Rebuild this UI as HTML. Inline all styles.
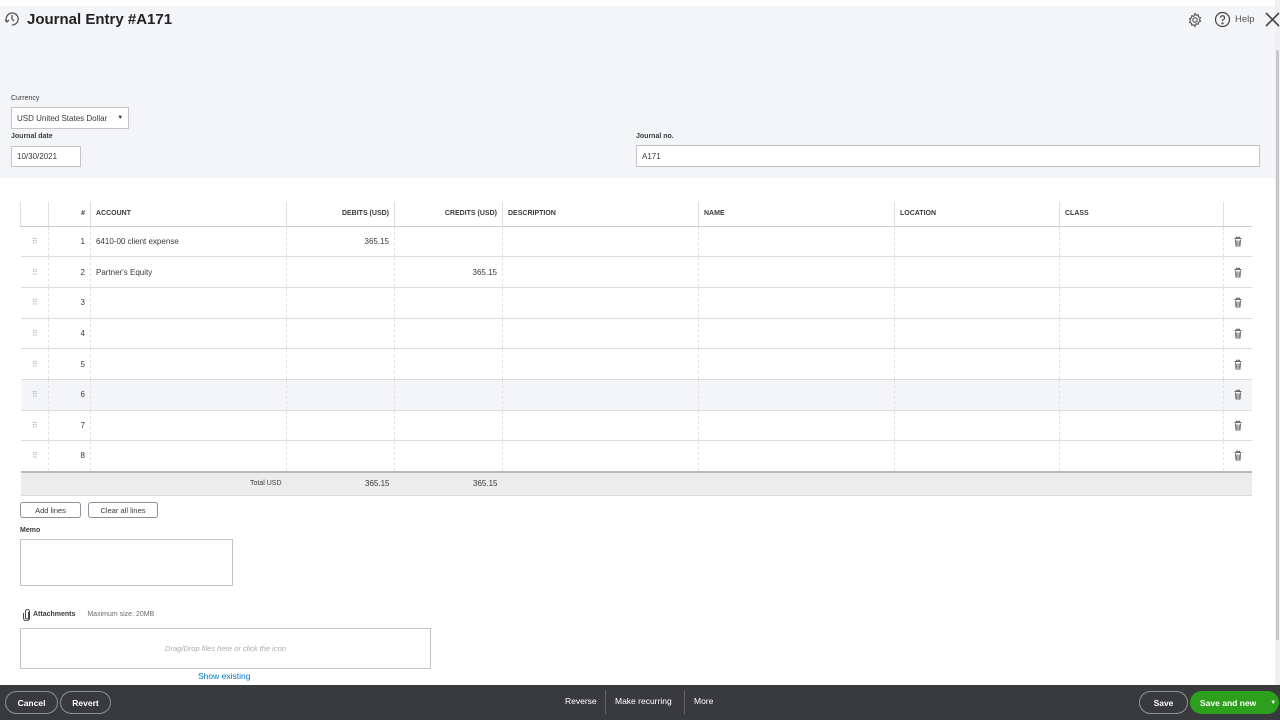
<!DOCTYPE html>
<html><head><meta charset="utf-8"><style>
*{box-sizing:border-box;margin:0;padding:0}
body{width:1280px;height:720px;overflow:hidden;background:#fff;font-family:"Liberation Sans",Arial,sans-serif;color:#393a3d;position:relative}
.a{position:absolute}
.hdr{left:0;top:6px;width:1275px;height:172px;background:#f4f5f8}
.sb{left:1275px;top:0;width:5px;height:686px;background:#f0f0f0}
.sb i{position:absolute;left:1px;top:50px;width:3px;height:590px;background:#c8c8c8}
.lbl{font-size:7px;font-weight:bold;color:#393a3d}
.inp{background:#fff;border:1px solid #c4c4c4;font-size:8px;padding-left:5px;display:flex;align-items:center;color:#393a3d}
table{position:absolute;left:20px;top:202px;border-collapse:collapse;font-size:8px;table-layout:fixed}
td{height:30.7px;border-bottom:1px solid #dcdcdc;border-left:1px dashed #e2e2e2;padding:0 5px;white-space:nowrap}
td:first-child{border-left:none}
tr.h td{height:24px;font-size:7px;font-weight:bold;border-bottom:1px solid #ccc;border-left:1px solid #e0e0e0;border-top:none}
tr.hl td{background:#f4f5f8}
tr.t td{height:24px;background:#ececec;border-top:2px solid #bbb;border-left:none}
.r{text-align:right}
.dr{color:#aaa;font-size:8px;text-align:center;letter-spacing:-1px}
.tr svg{display:block;margin:0 auto}
.btn{border:1px solid #8d9096;border-radius:3px;font-size:7.5px;display:flex;align-items:center;justify-content:center;background:#fff}
.ft{left:0;top:685px;width:1280px;height:35px;background:#393a3d}
.fb{border:1px solid #8d9096;border-radius:14px;color:#fff;font-size:8.5px;font-weight:bold;display:flex;align-items:center;justify-content:center}
.fl{color:#fff;font-size:8.5px;top:696px}
</style></head><body>
<div class="a hdr"></div>
<div class="a sb"><i></i></div>
<svg class="a" style="left:4px;top:11px" width="16" height="16" viewBox="0 0 16 16" fill="none" stroke="#555" stroke-width="1.3"><path d="M3 11A6 6 0 1 1 8 14"/><path d="M8 4v4l2 2"/><path d="M1 9l2 2 2-2"/></svg>
<div class="a" style="left:27px;top:11px;font-size:15px;font-weight:bold;color:#222">Journal Entry #A171</div>
<svg class="a" style="left:1187px;top:12px" width="16" height="16" viewBox="0 0 16 16" fill="none" stroke="#555" stroke-width="1.1"><circle cx="8" cy="8" r="2.2"/><path d="M8 1.5l1.2 1.8 2-.6.3 2.1 2 .8-1 1.9 1 1.9-2 .8-.3 2.1-2-.6L8 14.5l-1.2-1.8-2 .6-.3-2.1-2-.8 1-1.9-1-1.9 2-.8.3-2.1 2 .6z"/></svg>
<svg class="a" style="left:1214px;top:11px" width="17" height="17" viewBox="0 0 17 17" fill="none" stroke="#444" stroke-width="1.2"><circle cx="8.5" cy="8.5" r="7"/><path d="M6.5 6.8a2 2 0 1 1 2.6 1.9c-.6.2-.6.7-.6 1.3"/><circle cx="8.5" cy="12.3" r=".5" fill="#444"/></svg>
<div class="a" style="left:1235px;top:14px;font-size:9.5px;color:#555">Help</div>
<svg class="a" style="left:1265px;top:12px" width="15" height="15" viewBox="0 0 15 15" stroke="#444" stroke-width="1.6"><path d="M1 1l13 13M14 1L1 14"/></svg>

<div class="a lbl" style="left:11px;top:95px;font-weight:normal">Currency</div>
<div class="a inp" style="left:11px;top:107px;width:118px;height:22px">USD United States Dollar<span style="margin-left:10px;font-size:6px">▼</span></div>
<div class="a lbl" style="left:11px;top:133px">Journal date</div>
<div class="a inp" style="left:11px;top:146px;width:70px;height:21px">10/30/2021</div>
<div class="a lbl" style="left:636px;top:133px">Journal no.</div>
<div class="a inp" style="left:636px;top:145px;width:624px;height:22px">A171</div>

<svg width="0" height="0" style="position:absolute"><defs><g id="tc"><path d="M1.5 2.5h7M3.5 2.5V1.2h3v1.3M2.5 3.5l.5 6.5h4l.5-6.5M4 4.5v4.5M6 4.5v4.5" fill="none" stroke="#666" stroke-width="1"/></g></defs></svg>
<table>
<colgroup><col style="width:28px"><col style="width:42px"><col style="width:196px"><col style="width:108px"><col style="width:108px"><col style="width:196px"><col style="width:196px"><col style="width:165px"><col style="width:164px"><col style="width:28px"></colgroup>
<tr class="h"><td></td><td class="r">#</td><td>ACCOUNT</td><td class="r">DEBITS (USD)</td><td class="r">CREDITS (USD)</td><td>DESCRIPTION</td><td>NAME</td><td>LOCATION</td><td>CLASS</td><td></td></tr>
<tr><td class="dr">⠿</td><td class="r">1</td><td>6410-00 client expense</td><td class="r">365.15</td><td></td><td></td><td></td><td></td><td></td><td class="tr"><svg width="10" height="11"><use href="#tc"/></svg></td></tr>
<tr><td class="dr">⠿</td><td class="r">2</td><td>Partner's Equity</td><td></td><td class="r">365.15</td><td></td><td></td><td></td><td></td><td class="tr"><svg width="10" height="11"><use href="#tc"/></svg></td></tr>
<tr><td class="dr">⠿</td><td class="r">3</td><td></td><td></td><td></td><td></td><td></td><td></td><td></td><td class="tr"><svg width="10" height="11"><use href="#tc"/></svg></td></tr>
<tr><td class="dr">⠿</td><td class="r">4</td><td></td><td></td><td></td><td></td><td></td><td></td><td></td><td class="tr"><svg width="10" height="11"><use href="#tc"/></svg></td></tr>
<tr><td class="dr">⠿</td><td class="r">5</td><td></td><td></td><td></td><td></td><td></td><td></td><td></td><td class="tr"><svg width="10" height="11"><use href="#tc"/></svg></td></tr>
<tr class="hl"><td class="dr">⠿</td><td class="r">6</td><td></td><td></td><td></td><td></td><td></td><td></td><td></td><td class="tr"><svg width="10" height="11"><use href="#tc"/></svg></td></tr>
<tr><td class="dr">⠿</td><td class="r">7</td><td></td><td></td><td></td><td></td><td></td><td></td><td></td><td class="tr"><svg width="10" height="11"><use href="#tc"/></svg></td></tr>
<tr><td class="dr">⠿</td><td class="r">8</td><td></td><td></td><td></td><td></td><td></td><td></td><td></td><td class="tr"><svg width="10" height="11"><use href="#tc"/></svg></td></tr>
<tr class="t"><td></td><td></td><td class="r" style="font-size:7px">Total USD</td><td class="r">365.15</td><td class="r">365.15</td><td></td><td></td><td></td><td></td><td></td></tr>
</table>

<div class="a btn" style="left:20px;top:502px;width:61px;height:16px">Add lines</div>
<div class="a btn" style="left:88px;top:502px;width:70px;height:16px">Clear all lines</div>
<div class="a lbl" style="left:20px;top:527px">Memo</div>
<div class="a" style="left:20px;top:539px;width:213px;height:47px;border:1px solid #c4c4c4"></div>
<svg class="a" style="left:23px;top:609px" width="8" height="12" viewBox="0 0 8 12" fill="none" stroke="#444" stroke-width="1"><path d="M5.5 3v5.5a1.5 1.5 0 0 1-3 0V2.5a2 2 0 0 1 4 0v6.5a3 3 0 0 1-6 0V4"/></svg>
<div class="a" style="left:33px;top:611px;font-size:7px;font-weight:bold">Attachments <span style="font-weight:normal;color:#6b6c72;margin-left:10px">Maximum size: 20MB</span></div>
<div class="a" style="left:20px;top:628px;width:411px;height:41px;border:1px solid #c4c4c4;font-size:7.5px;font-style:italic;color:#aaa;display:flex;align-items:center;justify-content:center">Drag/Drop files here or click the icon</div>
<div class="a" style="left:198px;top:671px;font-size:8.5px;color:#0077c5">Show existing</div>

<div class="a ft"></div>
<div class="a fb" style="left:5px;top:691px;width:53px;height:23px">Cancel</div>
<div class="a fb" style="left:60px;top:691px;width:51px;height:23px">Revert</div>
<div class="a fl" style="left:565px">Reverse</div>
<div class="a" style="left:605px;top:690px;width:1px;height:24px;background:#666"></div>
<div class="a fl" style="left:615px">Make recurring</div>
<div class="a" style="left:684px;top:690px;width:1px;height:24px;background:#666"></div>
<div class="a fl" style="left:694px">More</div>
<div class="a fb" style="left:1139px;top:691px;width:49px;height:23px">Save</div>
<div class="a fb" style="left:1190px;top:691px;width:89px;height:23px;background:#2ca01c;border-color:#2ca01c;justify-content:flex-start;padding-left:9px">Save and new<span style="margin-left:14px;font-size:6px">▼</span></div>
</body></html>
